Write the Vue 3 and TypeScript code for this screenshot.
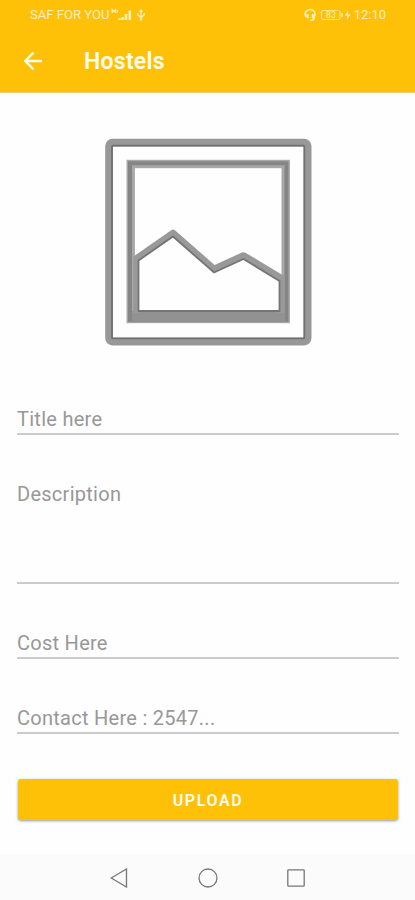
<script setup lang="ts">
interface Field {
  label: string
  kind: string
}

const fields: Field[] = [
  { label: 'Title here', kind: 'title' },
  { label: 'Description', kind: 'description' },
  { label: 'Cost Here', kind: 'cost' },
  { label: 'Contact Here : 2547...', kind: 'contact' },
]
</script>

<template>
  <div class="screen">
    <header class="top">
      <div class="status">
        <span class="carrier">SAF FOR YOU</span>
        <svg class="signal" width="36" height="14" viewBox="0 0 36 14" fill="none" stroke="#fff0c0">
          <path d="M1.200 5V1.500L2.800 3.500L4.400 1.500V5M6.200 1.500V5" stroke-width="1.100" />
          <path d="M8.500 12v-1.800M11.500 12V9M15 12V6M18.800 12V2.500" stroke-width="2.600" />
          <path d="M30 12V3M26.800 5v2L30 9.500L33.200 7V5M28.500 4L30 2l1.500 2" stroke-width="1.300" />
          <circle cx="30" cy="11.500" r=".9" />
        </svg>
        <span class="spacer"></span>
        <svg class="power" width="48" height="14" viewBox="0 0 48 14" fill="none" stroke="#fff0c0">
          <path d="M2.200 9C-.2 5 2.200 1.500 6.200 1.500S12 5 10.200 9" stroke-width="1.500" />
          <path d="M2 6.500h2.500v3.500H3zM10.500 6.500H8V10h2.500z" fill="#fff0c0" stroke-width=".6" />
          <path d="M10.300 9.500c0 2.200-1 2.800-3.800 2.800" stroke-width="1.400" />
          <rect x="17.500" y="2.500" width="18.500" height="9" rx="1.500" stroke-width="1" opacity=".75" />
          <path d="M38 5v4" stroke-width="1.600" />
          <text x="26.700" y="10.300" text-anchor="middle" class="charge">83</text>
          <path d="M43.800 2.500L41 7.500h2.300L43 11.500L46.500 6.500h-2.700z" fill="#fff0c0" stroke="none" />
        </svg>
        <span class="clock">12:10</span>
      </div>
      <div class="toolbar">
        <svg class="back" width="20" height="20" viewBox="0 0 20 20" fill="none" stroke="#fffdf2" stroke-width="2.300">
          <path d="M19 10H2.500M10.500 1.600L2.300 10L10.500 18.400" />
        </svg>
        <h1>Hostels</h1>
      </div>
    </header>

    <main>
      <svg class="picture" width="208" height="208" viewBox="104 138 208 208" fill="none">
        <defs>
          <filter id="soft" x="-5%" y="-5%" width="110%" height="110%">
            <feGaussianBlur stdDeviation="0.7" />
          </filter>
        </defs>
        <g filter="url(#soft)">
          <rect x="109" y="142.600" width="198.700" height="199" rx="3.500" stroke="#989898" stroke-width="7.600" />
          <rect x="112" y="145.700" width="192.300" height="192.600" rx="1" stroke="#6f6f6f" stroke-width="1.800" />
          <rect x="130.700" y="164" width="155" height="155" stroke="#a8a8a8" stroke-width="8.400" />
          <rect x="130" y="163.300" width="156.500" height="156.500" stroke="#858585" stroke-width="4" />
          <path d="M132 311h153v10H132z" fill="#929292" />
          <path d="M137 313V258.500L173 233.500L214 269.500L243.500 256L281 278.500V313" stroke="#999" stroke-width="7.600" stroke-linejoin="round" />
          <path d="M138.500 311V260.500L173 236.500L214 272.500L243.500 259L279.500 281V311z" fill="#fefefe" stroke="#747474" stroke-width="1.800" />
        </g>
      </svg>

      <form @submit.prevent>
        <div v-for="field in fields" :key="field.kind" class="field" :class="field.kind">
          <span>{{ field.label }}</span>
        </div>
        <button type="submit">UPLOAD</button>
      </form>
    </main>

    <nav>
      <svg width="18" height="20" viewBox="0 0 18 20"><path d="M16.500 1v18L1.200 10z" /></svg>
      <svg width="20" height="20" viewBox="0 0 20 20"><circle cx="10" cy="10" r="9" /></svg>
      <svg class="recent" width="18" height="18" viewBox="0 0 18 18"><rect x=".8" y=".8" width="16.400" height="16.400" rx=".8" /></svg>
    </nav>
  </div>
</template>

<style>
body {
  background: #fefefe;
}
</style>

<style scoped>
.screen {
  width: 415px;
  height: 900px;
  display: flex;
  flex-direction: column;
  overflow: hidden;
  background: #fefefe;
  font-family: Roboto, sans-serif;
}
.top {
  height: 92px;
  flex: none;
  background: #ffc107;
  border-bottom: 1px solid #ebcf81;
}
.status {
  height: 30px;
  box-sizing: border-box;
  padding: 0 29px 0 30px;
  display: flex;
  align-items: center;
  color: #fff0c0;
  font-size: 13.100px;
}
.carrier,
.clock {
  line-height: 15px;
  margin-bottom: 1px;
}
.signal {
  margin-left: 1px;
}
.spacer {
  flex: 1;
}
.power {
  margin-right: 2px;
}
.charge {
  font-size: 9px;
  fill: #fff0c0;
  stroke: none;
}
.clock {
  font-size: 13px;
}
.toolbar {
  height: 62px;
  display: flex;
  align-items: center;
  padding-left: 23px;
}
h1 {
  margin: 2px 0 0 41px;
  color: #fffdf2;
  font-size: 23px;
  font-weight: 600;
  line-height: 28px;
  letter-spacing: 0.250px;
}
main {
  flex: 1;
  display: flex;
  flex-direction: column;
  align-items: center;
  padding: 45px 16px 0 17px;
}
.picture {
  flex: none;
  margin-right: 1px;
}
form {
  width: 100%;
  display: flex;
  flex-direction: column;
  padding-top: 57px;
}
.field {
  box-sizing: border-box;
  height: 32px;
  margin: 0 0 43px;
  border-bottom: 2px solid #cbcbcb;
  color: #989898;
  font-size: 20px;
  line-height: 32px;
  letter-spacing: 0.270px;
}
.field.description {
  height: 106px;
}
.field.contact {
  margin-bottom: 45px;
}
button {
  height: 41px;
  margin: 0 1px;
  padding: 2px 0 0;
  border: 0;
  border-radius: 3px;
  background: #ffc107;
  box-shadow: 0 1px 3px rgba(0, 0, 0, 0.400);
  color: #fffdf2;
  font: 600 16px Roboto, sans-serif;
  letter-spacing: 1.600px;
}
nav {
  height: 46px;
  flex: none;
  display: flex;
  align-items: center;
  justify-content: center;
  gap: 70px;
  box-sizing: border-box;
  padding-top: 2px;
  background: #fbfbfb;
}
nav svg {
  fill: none;
  stroke: #777;
  stroke-width: 1.300;
}
.recent {
  margin-left: -1px;
}
</style>
